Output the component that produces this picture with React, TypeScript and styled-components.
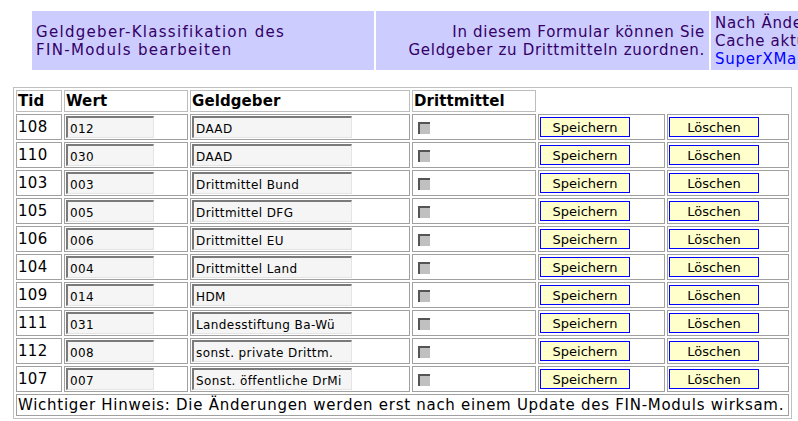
import React from 'react';
import styled, { createGlobalStyle } from 'styled-components';

const GlobalStyle = createGlobalStyle`
  html, body {
    margin: 0;
    padding: 0;
    overflow: hidden;
    background: #ffffff;
  }
  body {
    font-family: "DejaVu Sans", Verdana, sans-serif;
    color: #000;
  }
`;

const Page = styled.div`
  width: 798px;
  height: 421px;
  overflow: hidden;
  padding-top: 11px;
  box-sizing: border-box;
`;

const HeaderBar = styled.div`
  display: grid;
  grid-template-columns: 342px 333px 280px;
  column-gap: 2px;
  margin-left: 32px;
  height: 59px;
  width: 960px;
`;

const HeaderCell = styled.div<{ $align?: 'left' | 'right'; $spacing?: number }>`
  background: #ccccff;
  color: #330066;
  font-size: 15px;
  line-height: 18px;
  letter-spacing: ${(p) => p.$spacing ?? 0.7}px;
  display: flex;
  flex-direction: column;
  justify-content: center;
  align-items: ${(p) => (p.$align === 'right' ? 'flex-end' : 'flex-start')};
  text-align: ${(p) => p.$align ?? 'left'};
  padding: 0 4px;
  white-space: nowrap;
  overflow: hidden;
`;

const HeaderLink = styled.a`
  color: #0000ff;
  text-decoration: none;
`;

const Grid = styled.table`
  margin: 17px 0 0 13px;
  border: 1px solid #c0c0c0;
  border-spacing: 2px;
  border-collapse: separate;
  table-layout: fixed;
  width: 779px;
`;

const ColHead = styled.th`
  border: 1px solid #bdbdbd;
  padding: 0 1px;
  height: 20px;
  font-size: 15px;
  font-weight: bold;
  letter-spacing: 0.1px;
  text-align: left;
  vertical-align: middle;
  white-space: nowrap;
`;

const Cell = styled.td`
  border: 1px solid #a0a0a0;
  padding: 1px;
  height: 22px;
  font-size: 15px;
  letter-spacing: 0.3px;
  vertical-align: middle;
  white-space: nowrap;
`;

const NoteCell = styled(Cell)`
  height: 18px;
  padding: 1px 1px;
  letter-spacing: 0.72px;
`;

const TextField = styled.input<{ $w: number }>`
  display: block;
  box-sizing: border-box;
  width: ${(p) => p.$w}px;
  height: 22px;
  margin: 0;
  padding: 2px 2px 0;
  font-family: "DejaVu Sans", Verdana, sans-serif;
  font-size: 12px;
  letter-spacing: 0.4px;
  color: #000;
  background: #f5f5f5;
  border-style: solid;
  border-width: 2px 1px 1px 2px;
  border-color: #7a7a7a #e4e4e4 #e4e4e4 #7a7a7a;
  outline: none;
`;

const Box = styled.span`
  display: inline-block;
  box-sizing: border-box;
  width: 12px;
  height: 12px;
  margin-left: 4px;
  margin-top: 1px;
  background: #c0c0c0;
  border-style: solid;
  border-width: 2px 0 0 2px;
  border-color: #555 transparent transparent #555;
  vertical-align: middle;
`;

const ActionButton = styled.button`
  display: block;
  box-sizing: border-box;
  width: 90px;
  height: 20px;
  margin: 0;
  padding: 1px 0 0;
  background: #ffffcc;
  border: 1px solid #0000ff;
  font-family: "DejaVu Sans", Verdana, sans-serif;
  font-size: 13px;
  color: #000;
  line-height: 17px;
`;

const rows = [
  { tid: 108, wert: '012', name: 'DAAD' },
  { tid: 110, wert: '030', name: 'DAAD' },
  { tid: 103, wert: '003', name: 'Drittmittel Bund' },
  { tid: 105, wert: '005', name: 'Drittmittel DFG' },
  { tid: 106, wert: '006', name: 'Drittmittel EU' },
  { tid: 104, wert: '004', name: 'Drittmittel Land' },
  { tid: 109, wert: '014', name: 'HDM' },
  { tid: 111, wert: '031', name: 'Landesstiftung Ba-Wü' },
  { tid: 112, wert: '008', name: 'sonst. private Drittm.' },
  { tid: 107, wert: '007', name: 'Sonst. öffentliche DrMi' },
];

export default function App() {
  return (
    <Page>
      <GlobalStyle />
      <HeaderBar>
        <HeaderCell $spacing={1.3}>
          <span>Geldgeber-Klassifikation des</span>
          <span>FIN-Moduls bearbeiten</span>
        </HeaderCell>
        <HeaderCell $align="right">
          <span>In diesem Formular können Sie</span>
          <span>Geldgeber zu Drittmitteln zuordnen.</span>
        </HeaderCell>
        <HeaderCell>
          <span>Nach Änderungen bitte den</span>
          <span>Cache aktualisieren mit dem</span>
          <HeaderLink href="#">SuperXManager</HeaderLink>
        </HeaderCell>
      </HeaderBar>

      <Grid>
        <colgroup>
          <col style={{ width: 46 }} />
          <col style={{ width: 124 }} />
          <col style={{ width: 220 }} />
          <col style={{ width: 124 }} />
          <col style={{ width: 127 }} />
          <col style={{ width: 122 }} />
        </colgroup>
        <thead>
          <tr>
            <ColHead>Tid</ColHead>
            <ColHead>Wert</ColHead>
            <ColHead>Geldgeber</ColHead>
            <ColHead>Drittmittel</ColHead>
          </tr>
        </thead>
        <tbody>
          {rows.map((r) => (
            <tr key={r.tid}>
              <Cell>{r.tid}</Cell>
              <Cell>
                <TextField $w={88} defaultValue={r.wert} />
              </Cell>
              <Cell>
                <TextField $w={160} defaultValue={r.name} />
              </Cell>
              <Cell>
                <Box />
              </Cell>
              <Cell>
                <ActionButton>Speichern</ActionButton>
              </Cell>
              <Cell>
                <ActionButton>Löschen</ActionButton>
              </Cell>
            </tr>
          ))}
          <tr>
            <NoteCell colSpan={6}>
              Wichtiger Hinweis: Die Änderungen werden erst nach einem Update des FIN-Moduls wirksam.
            </NoteCell>
          </tr>
        </tbody>
      </Grid>
    </Page>
  );
}
